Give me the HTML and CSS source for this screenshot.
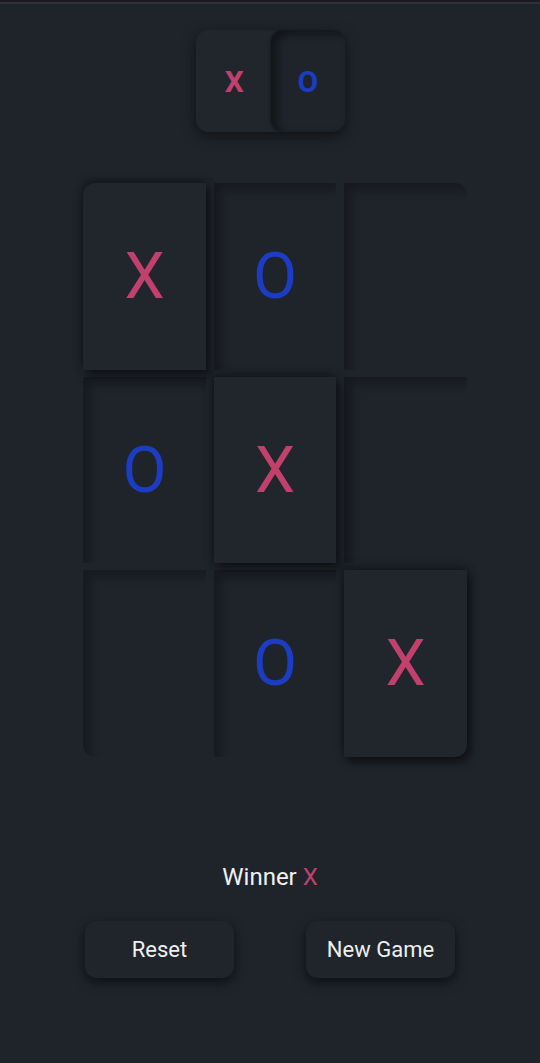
FILE: index.html
```html
<!DOCTYPE html>
<html>
<head>
<meta charset="utf-8">
<link rel="stylesheet" href="styles.css">
</head>
<body>
<div class="topbar"></div>
<main class="app">
  <div class="toggle">
    <div class="tog tog-raised"><span class="mark-x">X</span></div>
    <div class="tog tog-inset"><span class="mark-o">O</span></div>
  </div>
  <div class="board">
    <div class="cell raised c-tl"><span class="mark-x">X</span></div>
    <div class="cell inset"><span class="mark-o">O</span></div>
    <div class="cell inset c-tr"></div>
    <div class="cell inset"><span class="mark-o">O</span></div>
    <div class="cell raised"><span class="mark-x">X</span></div>
    <div class="cell inset"></div>
    <div class="cell inset c-bl"></div>
    <div class="cell inset"><span class="mark-o">O</span></div>
    <div class="cell raised c-br"><span class="mark-x">X</span></div>
  </div>
  <p class="winner">Winner <span class="mark-x">X</span></p>
  <div class="actions">
    <button class="btn">Reset</button>
    <button class="btn">New Game</button>
  </div>
</main>
</body>
</html>
```
FILE: styles.css
```css
html, body {
  margin: 0;
  padding: 0;
}
body {
  background: #1f242b;
  font-family: Roboto, "Liberation Sans", sans-serif;
  height: 1063px;
  overflow: hidden;
}
.topbar {
  height: 2px;
  background: #1a1b22;
  border-bottom: 2px solid #2f3239;
}
.app {
  display: flex;
  flex-direction: column;
  align-items: center;
}
.mark-x { color: #c2406c; }
.mark-o { color: #1c3cc2; }

.toggle {
  margin-top: 26px;
  width: 149px;
  height: 102px;
  display: flex;
  border-radius: 13px;
  background: #20252c;
  box-shadow: 0 4px 14px rgba(0,0,0,0.55);
  overflow: hidden;
}
.tog {
  flex: 1;
  display: flex;
  align-items: center;
  justify-content: center;
  font-size: 30px;
  font-weight: 700;
}
.tog-raised {
  background: #21262d;
  padding-left: 2px;
}
.tog-inset {
  background: #1f242b;
  border-radius: 13px;
  box-shadow: inset 6px 4px 8px rgba(0,0,0,0.45), -1px 0 3px rgba(0,0,0,0.35);
}

.board {
  margin-top: 51px;
  margin-left: 10px;
  display: grid;
  grid-template-columns: 123px 122px 123px;
  grid-template-rows: 187px 186px 187px;
  column-gap: 8px;
  row-gap: 7px;
}
.cell {
  display: flex;
  align-items: center;
  justify-content: center;
  font-size: 64px;
  background: #20252c;
}
.raised {
  background: #21262d;
  box-shadow: 3px 5px 10px rgba(0,0,0,0.55), -1px -3px 8px rgba(0,0,0,0.35);
  position: relative;
  z-index: 1;
}
.inset {
  background: #1f232a;
  box-shadow: inset 7px 7px 10px rgba(0,0,0,0.26), inset -2px -2px 4px rgba(255,255,255,0.015);
}
.c-tl { border-top-left-radius: 12px; }
.c-tr { border-top-right-radius: 12px; }
.c-bl { border-bottom-left-radius: 12px; }
.c-br { border-bottom-right-radius: 12px; }

.winner {
  margin: 106px 0 0;
  font-size: 24px;
  line-height: 28px;
  color: #f1f2f4;
}
.actions {
  margin-top: 30px;
  display: flex;
  gap: 72px;
}
.btn {
  width: 149px;
  height: 57px;
  border: none;
  border-radius: 12px;
  background: #20252c;
  color: #eef0f2;
  font-family: Roboto, "Liberation Sans", sans-serif;
  font-size: 22px;
  box-shadow: 0 4px 12px rgba(0,0,0,0.6);
  padding: 0;
}
```
